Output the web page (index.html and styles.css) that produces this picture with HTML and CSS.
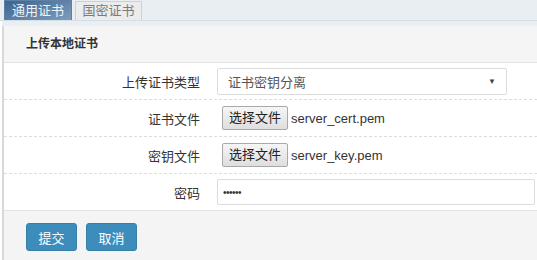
FILE: index.html
```html
<!DOCTYPE html>
<html lang="zh-CN">
<head>
    <meta charset="UTF-8">
    <title>上传本地证书</title>
    <link rel="stylesheet" href="styles.css">
</head>
<body>
    <div class="tabs">
        <div class="tab active">通用证书</div>
        <div class="tab">国密证书</div>
    </div>
    <div class="tab-gap"></div>

    <div class="panel">
        <div class="panel-heading">上传本地证书</div>

        <div class="form-body">
            <div class="row">
                <label class="label">上传证书类型</label>
                <div class="field">
                    <div class="select">
                        <span>证书密钥分离</span>
                        <span class="caret">&#9660;</span>
                    </div>
                </div>
            </div>
            <div class="row">
                <label class="label">证书文件</label>
                <div class="field file">
                    <span class="file-btn">选择文件</span>
                    <span class="file-name">server_cert.pem</span>
                </div>
            </div>
            <div class="row">
                <label class="label">密钥文件</label>
                <div class="field file">
                    <span class="file-btn">选择文件</span>
                    <span class="file-name">server_key.pem</span>
                </div>
            </div>
            <div class="row last">
                <label class="label">密码</label>
                <div class="field">
                    <div class="input">&#8226;&#8226;&#8226;&#8226;&#8226;&#8226;</div>
                </div>
            </div>
        </div>

        <div class="panel-footer">
            <button type="button" class="btn">提交</button>
            <button type="button" class="btn">取消</button>
        </div>
    </div>
</body>
</html>
```

FILE: styles.css
```css
body {
    margin: 0;
    font-family: "Liberation Sans", "Noto Sans CJK SC", sans-serif;
    font-size: 13px;
    color: #333;
    background-color: #fff;
}

.tabs {
    display: flex;
    align-items: flex-end;
    gap: 3px;
    height: 20px;
    padding-left: 4px;
    background-color: #e9eef3;
    border-bottom: 1px solid #d6dee6;
}

.tab {
    height: 19px;
    line-height: 18px;
    font-size: 13px;
    white-space: nowrap;
    color: #7a7a7a;
    background-color: #ececec;
    border: 1px solid #d0d0d0;
    border-bottom: none;
    box-sizing: border-box;
    width: 67px;
    text-align: center;
}

.tab.active {
    height: 20px;
    width: 68px;
    line-height: 19px;
    color: #eef3f8;
    background: linear-gradient(160deg, #3c6490, #7f9dbd);
    border-color: #5d80a6;
}

.tab-gap {
    height: 5px;
    background-color: #e9eef3;
    margin-left: 2px;
}

.panel {
    margin-left: 2px;
    border-left: 2px solid #d8d8d8;
}

.panel-heading {
    height: 36px;
    line-height: 36px;
    padding-left: 22px;
    font-size: 12px;
    font-weight: bold;
    color: #333;
    background-color: #f5f5f5;
    border-bottom: 1px solid #e2e2e2;
}

.row {
    display: flex;
    align-items: center;
    height: 36px;
    border-bottom: 1px dashed #dcdcdc;
}

.row.last {
    border-bottom: none;
}

.label {
    width: 196px;
    text-align: right;
    color: #333;
}

.field {
    margin-left: 17px;
    display: flex;
    align-items: center;
}

.select {
    width: 290px;
    height: 27px;
    box-sizing: border-box;
    border: 1px solid #dcdcdc;
    border-radius: 2px;
    padding: 0 10px;
    display: flex;
    align-items: center;
    justify-content: space-between;
    color: #555;
}

.caret {
    font-size: 8px;
    color: #444;
}

.file {
    margin-left: 22px;
}

.file-btn {
    height: 24px;
    line-height: 22px;
    box-sizing: border-box;
    padding: 0 6px;
    border: 1px solid #a9a9a9;
    border-radius: 2px;
    background: linear-gradient(#f6f6f6, #dedede);
    color: #222;
}

.file-name {
    margin-left: 3px;
    color: #333;
}

.input {
    width: 318px;
    height: 26px;
    line-height: 25px;
    box-sizing: border-box;
    border: 1px solid #dcdcdc;
    border-radius: 2px;
    padding-left: 5px;
    font-size: 10px;
    letter-spacing: -0.5px;
    color: #333;
}

.panel-footer {
    display: flex;
    gap: 9px;
    height: 50px;
    padding: 12px 0 0 22px;
    box-sizing: border-box;
    background-color: #f4f4f4;
    border-top: 1px solid #e2e2e2;
}

.btn {
    height: 28px;
    width: 51px;
    padding: 0;
    border: 1px solid #367fa9;
    border-radius: 3px;
    background-color: #3c8dbc;
    color: #fff;
    font-family: "Liberation Sans", "Noto Sans CJK SC", sans-serif;
    font-size: 13px;
}
```
